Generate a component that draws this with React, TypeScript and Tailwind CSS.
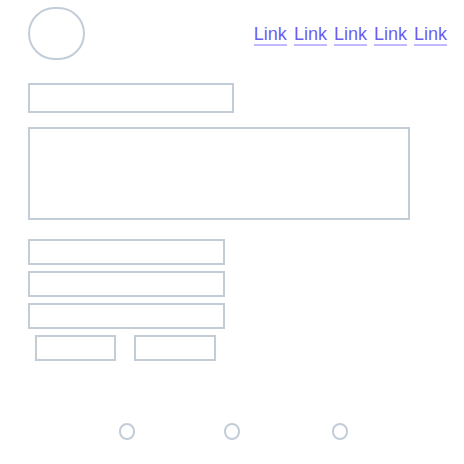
const links = ['Link', 'Link', 'Link', 'Link', 'Link'];

function Box({ className }: { className: string }) {
  return <div className={`border-2 border-[#c2cdd8] ${className}`} />;
}

export default function App() {
  return (
    <div className="h-[464px] w-[464px] bg-white font-['Liberation_Sans',sans-serif]">
      <header className="flex items-start justify-between pl-[28px] pr-[17px] pt-[7px]">
        <div className="h-[53px] w-[57px] rounded-full border-2 border-[#c2cdd8]" />
        <nav className="mt-[17px] flex gap-[7px] text-[18px] leading-[20px] text-[#6a5ef2]">
          {links.map((label, i) => (
            <a key={i} href="#" className="border-b-2 border-[#c0b9ff]">
              {label}
            </a>
          ))}
        </nav>
      </header>

      <main className="flex flex-col pl-[28px]">
        <Box className="mt-[23px] h-[30px] w-[206px]" />
        <Box className="mt-[14px] h-[93px] w-[382px]" />
        <div className="mt-[19px] flex flex-col gap-[6px]">
          <Box className="h-[26px] w-[197px]" />
          <Box className="h-[26px] w-[197px]" />
          <Box className="h-[26px] w-[197px]" />
          <div className="flex gap-[18px] pl-[7px]">
            <Box className="h-[26px] w-[81px]" />
            <Box className="h-[26px] w-[82px]" />
          </div>
        </div>
      </main>

      <footer className="mt-[62px] flex pl-[119px]">
        <div className="h-[17px] w-[16px] rounded-full border-2 border-[#c2cdd8]" />
        <div className="ml-[89px] h-[17px] w-[16px] rounded-full border-2 border-[#c2cdd8]" />
        <div className="ml-[92px] h-[17px] w-[16px] rounded-full border-2 border-[#c2cdd8]" />
      </footer>
    </div>
  );
}
